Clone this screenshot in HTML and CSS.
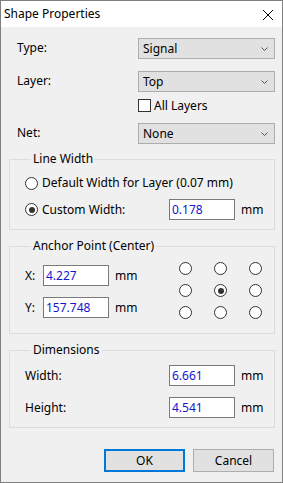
FILE: index.html
```html
<!DOCTYPE html>
<html>
<head>
<meta charset="utf-8">
<link rel="stylesheet" href="styles.css">
</head>
<body>
<div class="window">
  <div class="titlebar">
    <span class="title">Shape Properties</span>
    <svg class="close" width="12" height="12" viewBox="0 0 12 12"><path d="M1 1 L11 11 M11 1 L1 11" stroke="#000" stroke-width="1" fill="none"/></svg>
  </div>
  <div class="content">
    <div class="row first">
      <span class="label">Type:</span>
      <div class="select"><span>Signal</span><svg class="chev" width="7" height="4" viewBox="0 0 7 4"><path d="M0.5 0.5 L3.5 3.5 L6.5 0.5" stroke="#555" fill="none"/></svg></div>
    </div>
    <div class="row second">
      <span class="label">Layer:</span>
      <div class="select"><span>Top</span><svg class="chev" width="7" height="4" viewBox="0 0 7 4"><path d="M0.5 0.5 L3.5 3.5 L6.5 0.5" stroke="#555" fill="none"/></svg></div>
    </div>
    <div class="checkrow">
      <span class="checkbox"></span><span class="checklabel">All Layers</span>
    </div>
    <div class="row net">
      <span class="label">Net:</span>
      <div class="select"><span>None</span><svg class="chev" width="7" height="4" viewBox="0 0 7 4"><path d="M0.5 0.5 L3.5 3.5 L6.5 0.5" stroke="#555" fill="none"/></svg></div>
    </div>

    <div class="group g-line">
      <div class="gtitle">Line Width</div>
      <div class="radiorow r1"><span class="radio"></span><span class="rlabel">Default Width for Layer (0.07 mm)</span></div>
      <div class="radiorow r2"><span class="radio checked"></span><span class="rlabel grow">Custom Width:</span><span class="input w65">0.178</span><span class="unit">mm</span></div>
    </div>

    <div class="group g-anchor">
      <div class="gtitle">Anchor Point (Center)</div>
      <div class="anchorbody">
        <div class="coords">
          <div class="coordrow"><span class="clabel">X:</span><span class="input w65">4.227</span><span class="unit">mm</span></div>
          <div class="coordrow second"><span class="clabel">Y:</span><span class="input w65">157.748</span><span class="unit">mm</span></div>
        </div>
        <div class="grid">
          <span class="radio"></span><span class="radio"></span><span class="radio"></span>
          <span class="radio"></span><span class="radio checked"></span><span class="radio"></span>
          <span class="radio"></span><span class="radio"></span><span class="radio"></span>
        </div>
      </div>
    </div>

    <div class="group g-dim">
      <div class="gtitle">Dimensions</div>
      <div class="dimrow d1"><span class="dlabel">Width:</span><span class="input w65">6.661</span><span class="unit">mm</span></div>
      <div class="dimrow d2"><span class="dlabel">Height:</span><span class="input w65">4.541</span><span class="unit">mm</span></div>
    </div>

    <div class="buttons">
      <span class="btn default">OK</span>
      <span class="btn">Cancel</span>
    </div>
  </div>
</div>
</body>
</html>
```

FILE: styles.css
```css
* { box-sizing: border-box; }
html, body { margin: 0; padding: 0; background: #f0f0f0; }
body { font-family: "Noto Sans", "Liberation Sans", sans-serif; font-size: 12px; color: #000; }

.window {
  width: 283px; height: 483px;
  border: 1px solid #7f7f7f;
  background: #f0f0f0;
  overflow: hidden;
}
.titlebar {
  height: 26px; background: #fff;
  display: flex; align-items: center; justify-content: space-between;
  padding: 0 8px 0 3px;
}
.title { line-height: 16px; }
.close { display: block; margin-top: 1px; }

.content { padding: 11px 7px 0 8px; }

.row { display: flex; align-items: center; height: 21px; }
.row.second { margin-top: 12px; }
.row.net { margin-top: 11px; }
.label { flex: 1; padding-left: 8px; line-height: 16px; margin-top: -1px; }
.select {
  width: 137px; height: 21px;
  background: #e1e1e1; border: 1px solid #adadad;
  display: flex; align-items: center; justify-content: space-between;
  padding: 0 6px 0 4px;
}
.select span { line-height: 16px; }
.chev { display: block; }

.checkrow { display: flex; align-items: center; margin-top: 7px; height: 13px; padding-left: 129px; }
.checkbox { width: 13px; height: 13px; border: 1px solid #333; background: #fff; }
.checklabel { margin-left: 3px; line-height: 16px; }

.group {
  border: 1px solid #dcdcdc;
  margin-top: 15px;
}
.g-anchor, .g-dim { margin-top: 16px; }
.gtitle {
  width: fit-content; height: 16px; line-height: 16px;
  margin: -9px 0 0 6px; padding: 0 2px;
  background: #f0f0f0;
}

.radio {
  width: 13px; height: 13px; border-radius: 50%;
  border: 1px solid #333; background: #fff;
  display: flex; align-items: center; justify-content: center;
}
.radio.checked::after {
  content: ""; width: 6px; height: 6px; border-radius: 50%; background: #333;
}

.g-line { padding: 0 0 9px 15px; }
.radiorow { display: flex; align-items: center; }
.radiorow.r1 { margin-top: 8px; height: 16px; }
.radiorow.r2 { margin-top: 8px; height: 21px; }
.rlabel { margin-left: 4px; line-height: 16px; }
.rlabel.grow { flex: none; width: 127px; }

.input {
  display: flex; align-items: center;
  height: 21px; background: #fff; border: 1px solid #7a7a7a;
  padding-left: 2px; color: #1515d0; line-height: 16px;
}
.w65 { width: 66px; }
.unit { margin-left: 6px; line-height: 16px; }

.g-anchor { padding: 0 0 14px 15px; }
.anchorbody { display: flex; }
.coords { padding-top: 11px; }
.coordrow { display: flex; align-items: center; height: 21px; }
.coordrow.second { margin-top: 11px; }
.clabel { width: 18px; line-height: 16px; }
.grid {
  margin-top: 8px; margin-left: 42px;
  display: grid; grid-template-columns: 13px 13px 13px; grid-template-rows: 13px 13px 13px;
  column-gap: 22px; row-gap: 9px;
}

.g-dim { padding: 0 0 9px 15px; }
.dimrow { display: flex; align-items: center; height: 21px; }
.dimrow.d1 { margin-top: 7px; }
.dimrow.d2 { margin-top: 11px; }
.dlabel { width: 144px; line-height: 16px; }

.buttons { display: flex; justify-content: flex-end; gap: 8px; margin-top: 21px; padding-right: 1px; }
.btn {
  width: 81px; height: 23px;
  display: flex; align-items: center; justify-content: center;
  background: #e1e1e1; border: 1px solid #adadad;
  line-height: 16px;
}
.btn.default { border: 2px solid #0078d7; }
```
